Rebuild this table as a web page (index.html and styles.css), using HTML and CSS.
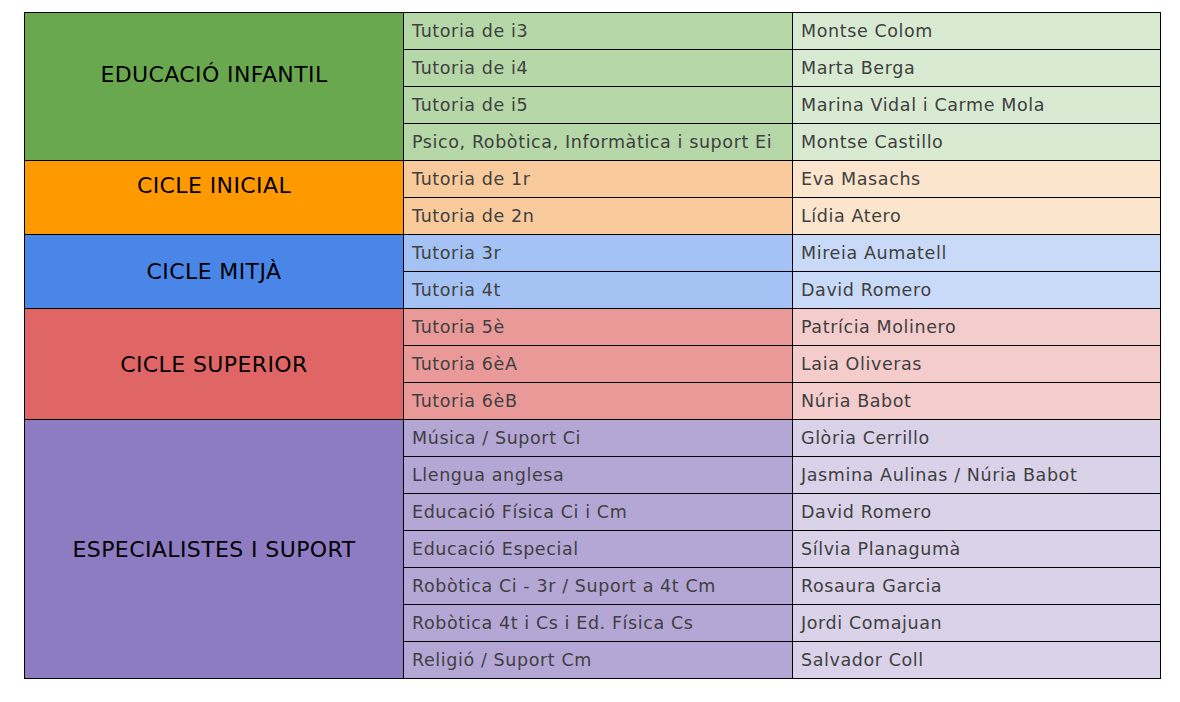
FILE: index.html
```html
<!DOCTYPE html>
<html lang="ca">
<head>
<meta charset="utf-8">
<title>Tutories i especialistes</title>
<link rel="stylesheet" href="styles.css">
</head>
<body>
<div class="page">
<table class="staff">
  <colgroup><col class="c1"><col class="c2"><col class="c3"></colgroup>
  <tbody>
    <tr class="ei">
      <td class="cat lifted" rowspan="4">EDUCACIÓ INFANTIL</td>
      <td class="mid">Tutoria de i3</td><td class="light">Montse Colom</td>
    </tr>
    <tr class="ei"><td class="mid">Tutoria de i4</td><td class="light">Marta Berga</td></tr>
    <tr class="ei"><td class="mid">Tutoria de i5</td><td class="light">Marina Vidal i Carme Mola</td></tr>
    <tr class="ei"><td class="mid">Psico, Robòtica, Informàtica i suport Ei</td><td class="light">Montse Castillo</td></tr>

    <tr class="ci">
      <td class="cat lifted" rowspan="2">CICLE INICIAL</td>
      <td class="mid">Tutoria de 1r</td><td class="light">Eva Masachs</td>
    </tr>
    <tr class="ci"><td class="mid">Tutoria de 2n</td><td class="light">Lídia Atero</td></tr>

    <tr class="cm">
      <td class="cat" rowspan="2">CICLE MITJÀ</td>
      <td class="mid">Tutoria 3r</td><td class="light">Mireia Aumatell</td>
    </tr>
    <tr class="cm"><td class="mid">Tutoria 4t</td><td class="light">David Romero</td></tr>

    <tr class="cs">
      <td class="cat" rowspan="3">CICLE SUPERIOR</td>
      <td class="mid">Tutoria 5è</td><td class="light">Patrícia Molinero</td>
    </tr>
    <tr class="cs"><td class="mid">Tutoria 6èA</td><td class="light">Laia Oliveras</td></tr>
    <tr class="cs"><td class="mid">Tutoria 6èB</td><td class="light">Núria Babot</td></tr>

    <tr class="es">
      <td class="cat" rowspan="7">ESPECIALISTES I SUPORT</td>
      <td class="mid">Música / Suport Ci</td><td class="light">Glòria Cerrillo</td>
    </tr>
    <tr class="es"><td class="mid">Llengua anglesa</td><td class="light">Jasmina Aulinas / Núria Babot</td></tr>
    <tr class="es"><td class="mid">Educació Física Ci i Cm</td><td class="light">David Romero</td></tr>
    <tr class="es"><td class="mid">Educació Especial</td><td class="light">Sílvia Planagumà</td></tr>
    <tr class="es"><td class="mid">Robòtica Ci - 3r / Suport a 4t Cm</td><td class="light">Rosaura Garcia</td></tr>
    <tr class="es"><td class="mid">Robòtica 4t i Cs i Ed. Física Cs</td><td class="light">Jordi Comajuan</td></tr>
    <tr class="es"><td class="mid">Religió / Suport Cm</td><td class="light">Salvador Coll</td></tr>
  </tbody>
</table>
</div>
</body>
</html>
```
FILE: styles.css
```css
html, body {
  margin: 0;
  padding: 0;
  background: #ffffff;
}

.page {
  padding: 12px 0 0 24px;
}

.staff {
  border-collapse: collapse;
  table-layout: fixed;
  width: 1136px;
  font-family: "DejaVu Sans", sans-serif;
}

.c1 { width: 379px; }
.c2 { width: 389px; }
.c3 { width: 368px; }

.staff td {
  border: 1px solid #000;
  height: 37px;
  padding: 0 8px;
  box-sizing: border-box;
  vertical-align: middle;
  white-space: nowrap;
  overflow: hidden;
  font-size: 17.5px;
  letter-spacing: 0.6px;
  color: #404040;
}

.staff td.cat {
  text-align: center;
  font-size: 22px;
  color: #000;
  letter-spacing: 0.4px;
}

.staff td.lifted {
  padding-bottom: 24px;
}

.ei .cat { background: #6aa84f; }
.ei .mid { background: #b6d7a8; }
.ei .light { background: #d9ead3; }

.ci .cat { background: #ff9900; }
.ci .mid { background: #f9cb9c; }
.ci .light { background: #fce5cd; }

.cm .cat { background: #4a86e8; }
.cm .mid { background: #a4c2f4; }
.cm .light { background: #c9daf8; }

.cs .cat { background: #e06666; }
.cs .mid { background: #ea9999; }
.cs .light { background: #f4cccc; }

.es .cat { background: #8e7cc3; }
.es .mid { background: #b4a7d6; }
.es .light { background: #d9d2e9; }
```
